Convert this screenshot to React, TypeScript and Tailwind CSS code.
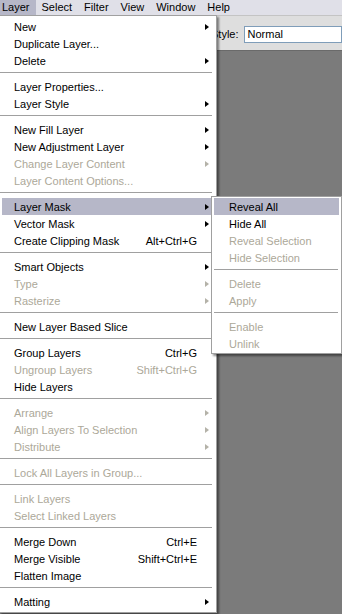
type Item =
  | { sep: true }
  | { label: string; shortcut?: string; arrow?: boolean; disabled?: boolean; active?: boolean }

const font = { fontFamily: '"Liberation Sans", Arial, sans-serif' }

const mainItems: Item[] = [
  { label: 'New', arrow: true },
  { label: 'Duplicate Layer...' },
  { label: 'Delete', arrow: true },
  { sep: true },
  { label: 'Layer Properties...' },
  { label: 'Layer Style', arrow: true },
  { sep: true },
  { label: 'New Fill Layer', arrow: true },
  { label: 'New Adjustment Layer', arrow: true },
  { label: 'Change Layer Content', arrow: true, disabled: true },
  { label: 'Layer Content Options...', disabled: true },
  { sep: true },
  { label: 'Layer Mask', arrow: true, active: true },
  { label: 'Vector Mask', arrow: true },
  { label: 'Create Clipping Mask', shortcut: 'Alt+Ctrl+G' },
  { sep: true },
  { label: 'Smart Objects', arrow: true },
  { label: 'Type', arrow: true, disabled: true },
  { label: 'Rasterize', arrow: true, disabled: true },
  { sep: true },
  { label: 'New Layer Based Slice' },
  { sep: true },
  { label: 'Group Layers', shortcut: 'Ctrl+G' },
  { label: 'Ungroup Layers', shortcut: 'Shift+Ctrl+G', disabled: true },
  { label: 'Hide Layers' },
  { sep: true },
  { label: 'Arrange', arrow: true, disabled: true },
  { label: 'Align Layers To Selection', arrow: true, disabled: true },
  { label: 'Distribute', arrow: true, disabled: true },
  { sep: true },
  { label: 'Lock All Layers in Group...', disabled: true },
  { sep: true },
  { label: 'Link Layers', disabled: true },
  { label: 'Select Linked Layers', disabled: true },
  { sep: true },
  { label: 'Merge Down', shortcut: 'Ctrl+E' },
  { label: 'Merge Visible', shortcut: 'Shift+Ctrl+E' },
  { label: 'Flatten Image' },
  { sep: true },
  { label: 'Matting', arrow: true },
]

const subItems: Item[] = [
  { label: 'Reveal All', active: true },
  { label: 'Hide All' },
  { label: 'Reveal Selection', disabled: true },
  { label: 'Hide Selection', disabled: true },
  { sep: true },
  { label: 'Delete', disabled: true },
  { label: 'Apply', disabled: true },
  { sep: true },
  { label: 'Enable', disabled: true },
  { label: 'Unlink', disabled: true },
]

function Arrow({ disabled }: { disabled?: boolean }) {
  return (
    <span
      className={
        'ml-[8px] block h-0 w-0 border-y-[3.5px] border-l-[4px] border-y-transparent ' +
        (disabled ? 'border-l-[#b4b2a8]' : 'border-l-black')
      }
    />
  )
}

function MenuRow({ item, sub }: { item: Item; sub?: boolean }) {
  if ('sep' in item) {
    return (
      <div className="h-[9px] pt-[3px]">
        <div className={sub ? 'mr-[1px] h-px bg-[#a0a0a0]' : 'ml-[-2px] mr-[2px] h-px bg-[#a0a0a0]'} />
      </div>
    )
  }
  return (
    <div
      className={
        'flex h-[17px] items-center whitespace-nowrap pt-[1px] text-[11px] leading-none ' +
        (sub ? 'pl-[15px] ' : 'pl-[12px] ') +
        (item.active ? 'bg-[#b6b7c8] ' : '') +
        (item.disabled ? 'text-[#aca899]' : 'text-black')
      }
    >
      <span className="flex-1">{item.label}</span>
      {item.shortcut && <span>{item.shortcut}</span>}
      {!sub && <span className="flex w-[17px] items-center">{item.arrow && <Arrow disabled={item.disabled} />}</span>}
    </div>
  )
}

export default function App() {
  const bar = ['Layer', 'Select', 'Filter', 'View', 'Window', 'Help']
  return (
    <div className="relative flex h-[614px] w-[342px] flex-col overflow-hidden bg-[#7b7b7b]" style={font}>
      {/* menu bar */}
      <div className="flex h-[15px] items-stretch bg-[#e0e0e8] text-[11px] leading-none text-black">
        <div className="ml-[-4px] flex">
          {bar.map((b, i) => (
            <span key={b} className={'flex items-center px-[6px] ' + (i === 0 ? 'bg-[#b6b7c8]' : '')}>
              {b}
            </span>
          ))}
        </div>
      </div>

      {/* options bar */}
      <div className="flex h-[35px] items-start border-t border-[#c4c4c4] bg-[#dedede] pl-[211px] pt-[10px]">
        <span className="mt-[3px] text-[11px] leading-none text-black">Style:</span>
        <div className="ml-[5px] flex h-[17px] flex-1 items-center border border-[#7f9db9] bg-white pl-[3px] text-[11px] leading-none text-black">
          Normal
        </div>
      </div>

      {/* workspace */}
      <div className="flex-1 border-t border-[#6a6a6a] bg-[#7b7b7b]" />

      {/* Layer menu */}
      <div className="absolute left-[-1px] top-[15px] w-[218px] border border-[#a0a0a0] bg-white px-[2px] py-[2px] shadow-[2px_2px_2px_rgba(0,0,0,0.45)]">
        {mainItems.map((it, i) => (
          <MenuRow key={i} item={it} />
        ))}
      </div>

      {/* Layer Mask submenu */}
      <div className="absolute left-[211px] top-[196px] w-[131px] border border-[#a0a0a0] bg-white px-[2px] py-[1px] shadow-[2px_2px_2px_rgba(0,0,0,0.45)]">
        {subItems.map((it, i) => (
          <MenuRow key={i} item={it} sub />
        ))}
      </div>
    </div>
  )
}
